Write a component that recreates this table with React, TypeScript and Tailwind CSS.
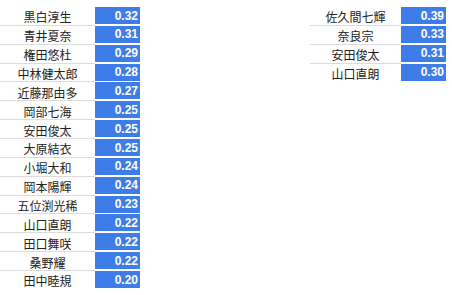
const left: [string, string][] = [
  ['黒白淳生', '0.32'],
  ['青井夏奈', '0.31'],
  ['権田悠杜', '0.29'],
  ['中林健太郎', '0.28'],
  ['近藤那由多', '0.27'],
  ['岡部七海', '0.25'],
  ['安田俊太', '0.25'],
  ['大原結衣', '0.25'],
  ['小堀大和', '0.24'],
  ['岡本陽輝', '0.24'],
  ['五位渕光稀', '0.23'],
  ['山口直朗', '0.22'],
  ['田口舞咲', '0.22'],
  ['桑野耀', '0.22'],
  ['田中睦規', '0.20'],
]

const right: [string, string][] = [
  ['佐久間七輝', '0.39'],
  ['奈良宗', '0.33'],
  ['安田俊太', '0.31'],
  ['山口直朗', '0.30'],
]

function Table({ rows, nameWidth }: { rows: [string, string][]; nameWidth: string }) {
  return (
    <div className="flex flex-col">
      {rows.map(([name, score], i) => (
        <div key={name + i} className="flex h-[18.86px]">
          <div
            className={`${nameWidth} flex items-end justify-center border-t pb-[0.5px] text-[12px] leading-[14px] text-[#222] ${
              i === 0 ? 'border-transparent' : 'border-[#dcdcdc]'
            }`}
            style={{ fontFamily: '"Noto Sans CJK JP", sans-serif' }}
          >
            {name}
          </div>
          <div
            className="mt-[1px] flex h-[17px] w-[45px] items-center justify-end bg-[#3e7ce8] pr-[2px] text-[12px] font-bold text-white"
            style={{ fontFamily: '"Liberation Sans", Arial, sans-serif' }}
          >
            {score}
          </div>
        </div>
      ))}
    </div>
  )
}

export default function App() {
  return (
    <div className="flex h-[295px] w-[452px] bg-white pt-[6px]">
      <Table rows={left} nameWidth="w-[95px]" />
      <div className="ml-[170px]">
        <Table rows={right} nameWidth="w-[91px]" />
      </div>
    </div>
  )
}
